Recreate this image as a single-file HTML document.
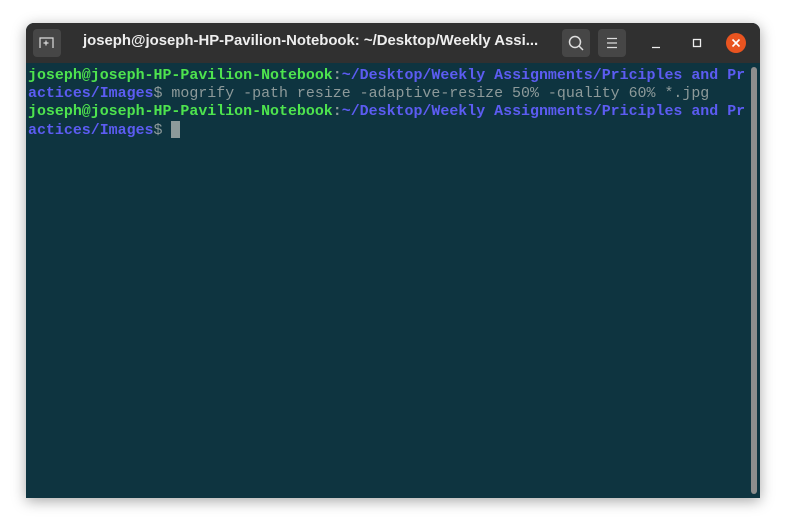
<!DOCTYPE html>
<html><head><style>
body{margin:0;width:786px;height:527px;background:#fff;overflow:hidden;position:relative;font-family:"Liberation Sans",sans-serif}
.win{position:absolute;left:26px;top:23px;width:734px;height:475px;border-radius:8px 8px 0 0;overflow:hidden;box-shadow:0 3px 14px rgba(0,0,0,.35);background:#0e3440}
.tb{position:absolute;left:0;top:0;width:734px;height:40px;background:#303030}
.btn{position:absolute;top:6px;width:28px;height:28px;border-radius:4px;background:#464646}
.title{position:absolute;left:57px;top:10px;color:#eee;font-weight:bold;font-size:14.9px;white-space:nowrap}
.term{position:absolute;left:2px;top:44px;font-family:"Liberation Mono",monospace;font-size:14.95px;line-height:18px;font-weight:bold;white-space:pre;color:#8d9a9a}
.g{color:#4ee44e}.b{color:#5c5cf2}.n{font-weight:normal}
.sb{position:absolute;left:725px;top:44px;width:6px;height:427px;border-radius:3px;background:#8d8d8d}
</style></head><body>
<div class="win">
<div class="tb">
<div class="btn" style="left:7px"><svg width="28" height="28" viewBox="0 0 28 28" fill="none" stroke="#ddd" stroke-width="1.2"><path d="M7 19V9h13v10M10.5 14h5M13 11.5v5"/></svg></div>
<div class="title">joseph@joseph-HP-Pavilion-Notebook: ~/Desktop/Weekly Assi...</div>
<div class="btn" style="left:536px"><svg width="28" height="28" viewBox="0 0 28 28" fill="none" stroke="#ddd" stroke-width="1.5"><circle cx="13" cy="13" r="5.5"/><path d="M17 17l4 4"/></svg></div>
<div class="btn" style="left:572px"><svg width="28" height="28" viewBox="0 0 28 28" stroke="#ddd" stroke-width="1.2"><path d="M9 9.5h10M9 14h10M9 18.5h10"/></svg></div>
<svg style="position:absolute;left:620px;top:10px" width="20" height="20" viewBox="0 0 20 20" stroke="#eee" stroke-width="1.3" fill="none"><path d="M6 14.5h8"/></svg>
<svg style="position:absolute;left:661px;top:10px" width="20" height="20" viewBox="0 0 20 20" stroke="#eee" stroke-width="1.3" fill="none"><rect x="6.5" y="6.5" width="7" height="7"/></svg>
<svg style="position:absolute;left:700px;top:10px" width="20" height="20" viewBox="0 0 20 20"><circle cx="10" cy="10" r="10" fill="#e95420"/><path d="M6.5 6.5l7 7M13.5 6.5l-7 7" stroke="#fff" stroke-width="1.6"/></svg>
</div>
<div class="term"><span class="g">joseph@joseph-HP-Pavilion-Notebook</span>:<span class="b">~/Desktop/Weekly Assignments/Priciples and Pr</span>
<span class="b">actices/Images</span><span class="n">$ mogrify -path resize -adaptive-resize 50% -quality 60% *.jpg</span>
<span class="g">joseph@joseph-HP-Pavilion-Notebook</span>:<span class="b">~/Desktop/Weekly Assignments/Priciples and Pr</span>
<span class="b">actices/Images</span><span class="n">$ </span><span style="display:inline-block;width:9px;height:17px;background:#8d9a9a;vertical-align:-4px"></span></div>
<div class="sb"></div>
</div>
</body></html>
